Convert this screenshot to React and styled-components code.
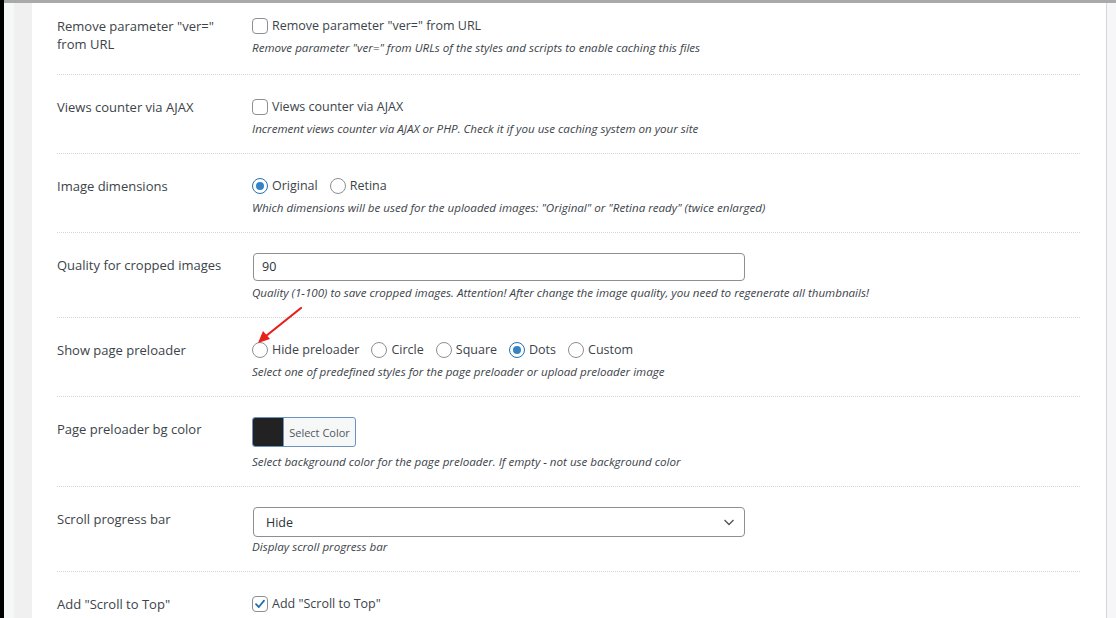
import React from "react";
import styled, { createGlobalStyle } from "styled-components";

const GlobalStyle = createGlobalStyle`
  html, body {
    margin: 0;
    padding: 0;
    height: 100%;
    overflow: hidden;
  }
  body {
    font-family: "Open Sans", "Noto Sans", sans-serif;
    font-size: 13px;
    color: #3c434a;
    background: #000;
  }
`;

const rows = [
  {
    key: "ver",
    label: 'Remove parameter "ver=" from URL',
    type: "checkbox",
    text: 'Remove parameter "ver=" from URL',
    desc: 'Remove parameter "ver=" from URLs of the styles and scripts to enable caching this files',
    first: true,
  },
  {
    key: "ajax",
    label: "Views counter via AJAX",
    type: "checkbox",
    text: "Views counter via AJAX",
    desc: "Increment views counter via AJAX or PHP. Check it if you use caching system on your site",
  },
  {
    key: "dims",
    label: "Image dimensions",
    type: "radio",
    options: ["Original", "Retina"],
    selected: "Original",
    desc: 'Which dimensions will be used for the uploaded images: "Original" or "Retina ready" (twice enlarged)',
  },
  {
    key: "quality",
    label: "Quality for cropped images",
    type: "input",
    value: "90",
    desc: "Quality (1-100) to save cropped images. Attention! After change the image quality, you need to regenerate all thumbnails!",
  },
  {
    key: "preloader",
    label: "Show page preloader",
    type: "radio",
    options: ["Hide preloader", "Circle", "Square", "Dots", "Custom"],
    selected: "Dots",
    desc: "Select one of predefined styles for the page preloader or upload preloader image",
    arrow: true,
  },
  {
    key: "bg",
    label: "Page preloader bg color",
    type: "color",
    desc: "Select background color for the page preloader. If empty - not use background color",
  },
  {
    key: "progress",
    label: "Scroll progress bar",
    type: "select",
    value: "Hide",
    desc: "Display scroll progress bar",
  },
  {
    key: "top",
    label: 'Add "Scroll to Top"',
    type: "checkbox",
    checked: true,
    text: 'Add "Scroll to Top"',
  },
];

const Checkbox = ({ checked }) => (
  <Box $checked={checked}>
    {checked && (
      <svg width="14" height="14" viewBox="0 0 14 14">
        <path d="M3 7.2 L5.8 10 L11 3.6" fill="none" stroke="#2271b1" strokeWidth="1.8" strokeLinecap="round" strokeLinejoin="round" />
      </svg>
    )}
  </Box>
);

const Control = ({ row }) => {
  if (row.type === "checkbox") {
    return (
      <ChoiceLine>
        <Choice>
          <Checkbox checked={row.checked} />
          <span>{row.text}</span>
        </Choice>
      </ChoiceLine>
    );
  }
  if (row.type === "radio") {
    return (
      <ChoiceLine>
        {row.options.map((o) => (
          <Choice key={o}>
            <Radio $checked={o === row.selected} />
            <span>{o}</span>
          </Choice>
        ))}
      </ChoiceLine>
    );
  }
  if (row.type === "input") {
    return <TextField>{row.value}</TextField>;
  }
  if (row.type === "color") {
    return (
      <ColorButton>
        <Swatch />
        <ColorText>Select Color</ColorText>
      </ColorButton>
    );
  }
  return (
    <SelectField>
      <span>{row.value}</span>
      <svg width="14" height="14" viewBox="0 0 14 14">
        <path d="M2.5 5 L7 9.5 L11.5 5" fill="none" stroke="#50575e" strokeWidth="1.4" />
      </svg>
    </SelectField>
  );
};

const descGap = (type) => (type === "color" ? 6 : type === "input" ? 3 : 1);

const App = () => {
  return (
    <>
      <GlobalStyle />
      <Screen>
        <Window>
          <TopBar />
          <Body>
            <OuterGutter />
            <InnerGutter />
            <Panel>
              {rows.map((row) => (
                <Row key={row.key} $first={row.first} $last={!row.desc}>
                  <Label>{row.label}</Label>
                  <Field>
                    <Control row={row} />
                    {row.desc && <Desc $gap={descGap(row.type)}>{row.desc}</Desc>}
                    {row.arrow && (
                      <Arrow width="50" height="42" viewBox="0 0 50 42">
                        <path d="M47 2 L12 30" stroke="#e8201a" strokeWidth="2.2" strokeLinecap="round" />
                        <path d="M4 37 L9 25 L16 33 Z" fill="#e8201a" />
                      </Arrow>
                    )}
                  </Field>
                </Row>
              ))}
            </Panel>
            <RightEdge />
          </Body>
        </Window>
      </Screen>
    </>
  );
};

export default App;

const Screen = styled.div`
  display: flex;
  height: 618px;
  padding-left: 4px;
  background: #000;
`;
const Window = styled.div`
  flex: 1;
  display: flex;
  flex-direction: column;
  background: #f0f0f1;
`;
const TopBar = styled.div`
  height: 3px;
  background: #a9a9a9;
`;
const Body = styled.div`
  flex: 1;
  display: flex;
  min-height: 0;
`;
const OuterGutter = styled.div`
  width: 10px;
  background: #f6f7f7;
`;
const InnerGutter = styled.div`
  width: 18px;
  background: #f0f0f1;
`;
const Panel = styled.div`
  flex: 1;
  background: #fff;
  padding: 0 26px 0 25px;
  overflow: hidden;
`;
const RightEdge = styled.div`
  width: 9px;
  border-left: 1px solid #d6d6d8;
  background: #f6f6f8;
`;
const Row = styled.div`
  display: grid;
  grid-template-columns: 195px 1fr;
  padding: ${(p) => (p.$first ? "11px" : "20px")} 0 ${(p) => (p.$first ? "17px" : "15px")};
  border-bottom: ${(p) => (p.$last ? "none" : "1px dotted #d4d4d6")};
`;
const Label = styled.div`
  padding-top: 3px;
  line-height: 18px;
  color: #3c434a;
  padding-right: 20px;
`;
const Field = styled.div`
  position: relative;
  display: flex;
  flex-direction: column;
  align-items: flex-start;
`;
const ChoiceLine = styled.div`
  display: flex;
  align-items: center;
  height: 24px;
  gap: 12px;
`;
const Choice = styled.label`
  display: flex;
  align-items: center;
  gap: 4px;
  font-size: 12.5px;
  color: #3c434a;
  line-height: 18px;
`;
const Box = styled.span`
  box-sizing: border-box;
  width: 16px;
  height: 16px;
  border: 1px solid #8c8f94;
  border-radius: 4px;
  background: #fff;
  display: flex;
  align-items: center;
  justify-content: center;
`;
const Radio = styled.span`
  box-sizing: border-box;
  width: 16px;
  height: 16px;
  border-radius: 50%;
  border: 1px solid ${(p) => (p.$checked ? "#2271b1" : "#8c8f94")};
  background: #fff;
  display: flex;
  align-items: center;
  justify-content: center;
  &::after {
    content: "";
    display: ${(p) => (p.$checked ? "block" : "none")};
    width: 8px;
    height: 8px;
    border-radius: 50%;
    background: #3582c4;
  }
`;
const TextField = styled.div`
  box-sizing: border-box;
  width: 492px;
  height: 28px;
  margin-left: 1px;
  border: 1px solid #8c8f94;
  border-radius: 4px;
  padding: 0 8px;
  font-size: 12.5px;
  line-height: 26px;
  color: #2c3338;
`;
const SelectField = styled.div`
  box-sizing: border-box;
  width: 492px;
  height: 30px;
  margin-left: 1px;
  border: 1px solid #8c8f94;
  border-radius: 4px;
  padding: 0 8px 0 12px;
  display: flex;
  align-items: center;
  justify-content: space-between;
  font-size: 12.5px;
  color: #2c3338;
`;
const ColorButton = styled.div`
  box-sizing: border-box;
  display: flex;
  height: 30px;
  width: 104px;
  border: 1px solid #6b93bd;
  border-radius: 3px;
  overflow: hidden;
  background: #f6f7f7;
`;
const Swatch = styled.div`
  width: 30px;
  background: #222;
  border-right: 1px solid #6b93bd;
`;
const ColorText = styled.div`
  flex: 1;
  display: flex;
  align-items: center;
  justify-content: center;
  font-size: 11px;
  color: #50575e;
`;
const Desc = styled.p`
  margin: ${(p) => p.$gap}px 0 0;
  font-size: 11.6px;
  font-style: italic;
  line-height: 18px;
  color: #3c434a;
`;
const Arrow = styled.svg`
  position: absolute;
  left: 2px;
  top: -32px;
`;
